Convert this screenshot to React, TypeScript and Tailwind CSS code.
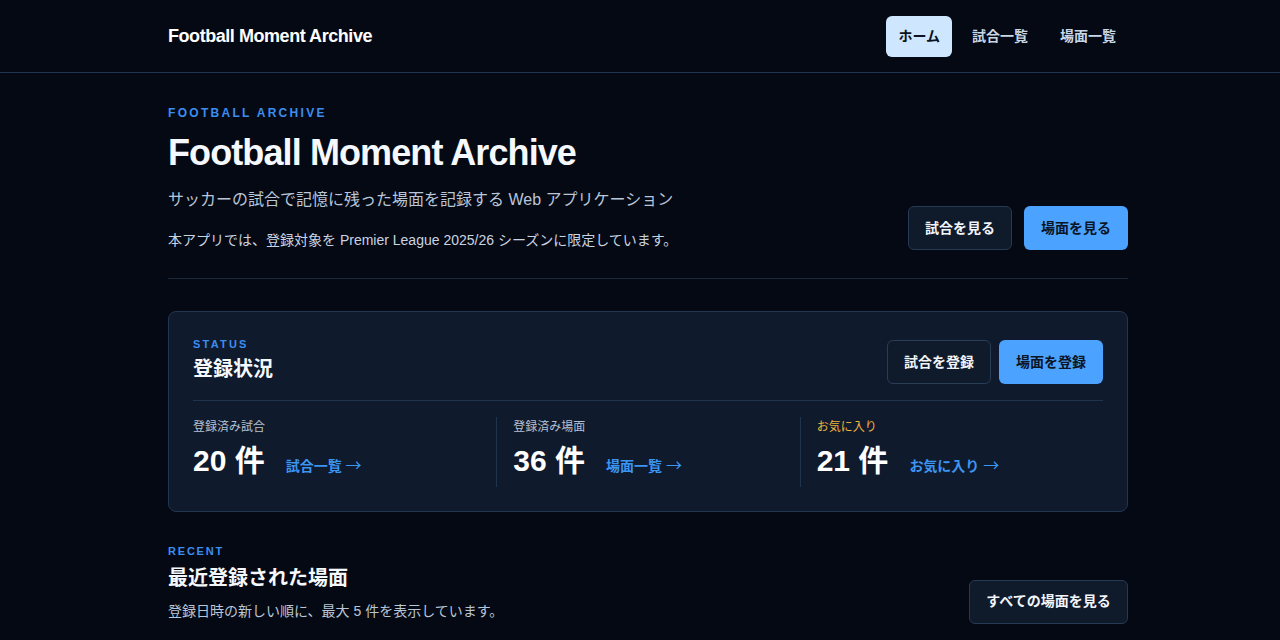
const font = { fontFamily: '"Liberation Sans", "Noto Sans CJK JP", sans-serif' };
const arrowFont = { fontFamily: '"Noto Sans CJK JP", sans-serif' };

const stats = [
  { label: "登録済み試合", count: 20, link: "試合一覧", accent: false },
  { label: "登録済み場面", count: 36, link: "場面一覧", accent: false },
  { label: "お気に入り", count: 21, link: "お気に入り", accent: true },
];

const App = () => {
  return (
    <div className="min-h-screen bg-[#050914] text-white" style={font}>
      <header className="border-b border-[#1f3550]">
        <div className="ml-[168px] flex h-[72px] w-[960px] items-center justify-between">
          <div className="text-[18px] font-bold tracking-[-0.45px]">Football Moment Archive</div>
          <nav className="flex items-center gap-2 text-[14px] font-bold">
            <a className="rounded-md bg-[#cfe6ff] px-3 py-[10px] text-[#0b1220]">ホーム</a>
            <a className="rounded-md px-3 py-[10px] text-[#c9d6e6]">試合一覧</a>
            <a className="rounded-md px-3 py-[10px] text-[#c9d6e6]">場面一覧</a>
          </nav>
        </div>
      </header>

      <main className="ml-[168px] w-[960px]">
        <section className="flex items-end justify-between border-b border-[#1c2a3d] pt-[31px] pb-[27px]">
          <div>
            <div className="text-[12px] font-bold tracking-[2.3px] text-[#3b8ef0]">FOOTBALL ARCHIVE</div>
            <h1 className="mt-[7px] text-[36px] font-bold leading-[48px] tracking-[-0.9px] text-[#f5f8fc]">
              Football Moment Archive
            </h1>
            <p className="mt-[11px] text-[16px] text-[#b9c6d8]">
              サッカーの試合で記憶に残った場面を記録する Web アプリケーション
            </p>
            <p className="mt-[18px] text-[14px] text-[#c9d4e2]">
              本アプリでは、登録対象を Premier League 2025/26 シーズンに限定しています。
            </p>
          </div>
          <div className="mb-[1px] flex gap-3 text-[14px] font-bold">
            <button className="h-[44px] w-[104px] rounded-md border border-[#263a55] bg-[#0f1a2b] text-[#f1f5fa]">
              試合を見る
            </button>
            <button className="h-[44px] w-[104px] rounded-md bg-[#4ca3ff] text-[#0b1526]">場面を見る</button>
          </div>
        </section>

        <section className="mt-[32px] rounded-lg border border-[#24364f] bg-[#0f1a2d] px-6 pt-[25px] pb-[24px]">
          <div className="flex items-start justify-between">
            <div>
              <div className="mt-[-1px] text-[11px] font-bold tracking-[2.2px] text-[#3b8ef0]">STATUS</div>
              <h2 className="mt-[1px] text-[20px] font-bold text-[#f5f8fc]">登録状況</h2>
            </div>
            <div className="mt-[3px] flex gap-2 text-[14px] font-bold">
              <button className="h-[44px] w-[104px] rounded-md border border-[#2a3d57] bg-[#0f1a2b] text-[#f1f5fa]">
                試合を登録
              </button>
              <button className="h-[44px] w-[104px] rounded-md bg-[#4ca3ff] text-[#0b1526]">場面を登録</button>
            </div>
          </div>

          <div className="mt-[16px] grid grid-cols-3 border-t border-[#22344d] pt-4">
            {stats.map((s, i) => (
              <div key={s.label} className={i === 0 ? "pr-4" : "border-l border-[#22344d] pl-4"}>
                <div className={"mt-[1px] text-[12px] " + (s.accent ? "text-[#f0b43c]" : "text-[#b4c1d3]")}>
                  {s.label}
                </div>
                <div className="mt-[2px] flex items-baseline gap-[21px] pb-[4px]">
                  <span className="text-[30px] font-bold text-white">{s.count} 件</span>
                  <a className="text-[14px] font-bold text-[#3d95f2]">
                    {s.link}{" "}
                    <span className="text-[16px] font-normal" style={arrowFont}>
                      →
                    </span>
                  </a>
                </div>
              </div>
            ))}
          </div>
        </section>

        <section className="mt-[31px] flex items-end justify-between pb-8">
          <div>
            <div className="text-[11px] font-bold tracking-[1.8px] text-[#3b8ef0]">RECENT</div>
            <h2 className="mt-[3px] text-[20px] font-bold text-[#f5f8fc]">最近登録された場面</h2>
            <p className="mt-[8px] text-[14px] text-[#b9c6d8]">登録日時の新しい順に、最大 5 件を表示しています。</p>
          </div>
          <button className="mb-[-2px] h-[44px] w-[159px] rounded-md border border-[#263a55] bg-[#0f1a2b] text-[14px] font-bold text-[#f1f5fa]">
            すべての場面を見る
          </button>
        </section>
      </main>
    </div>
  );
};

export default App;
